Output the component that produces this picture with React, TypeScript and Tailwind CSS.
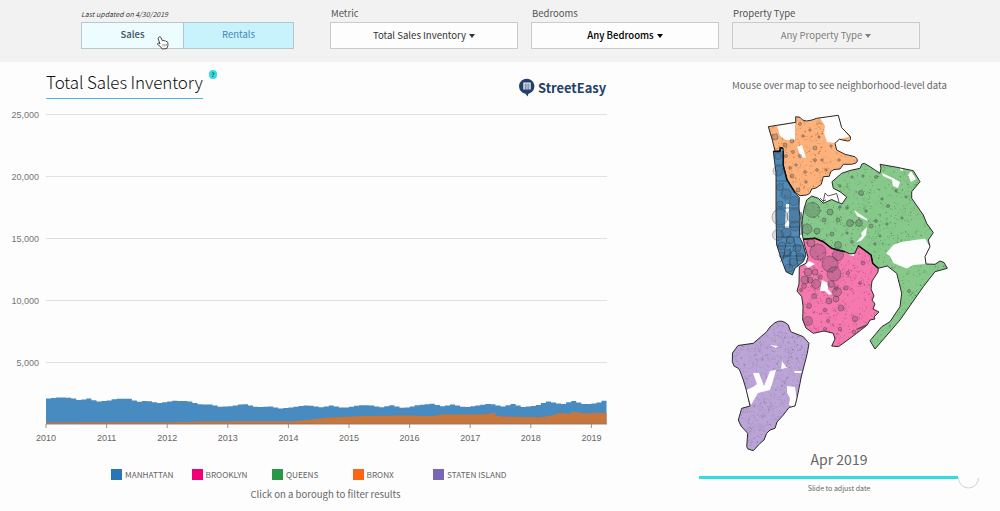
import React from 'react'

type Point = [number, number]

const BLUE_TOP: Point[] = [
  [46, 399], [52, 398], [62, 397.4], [72, 398], [80, 400.4], [88, 398.3], [98, 401.5], [109, 400.5], [116, 398.7], [130, 398.7],
  [138, 402], [147, 400.8], [159, 403], [175, 400.8], [188, 401], [200, 404.2], [211, 404.6], [220, 406.7], [230, 406.2], [244, 404],
  [258, 407.3], [270, 406.3], [282, 408.7], [297, 406.5], [308, 405.3], [322, 407.3], [331, 405.3], [343, 408], [360, 405.3], [370, 405.3],
  [382, 407.3], [392, 405.3], [404, 408.3], [417, 405.3], [433, 403.7], [443, 406.5], [453, 404.5], [465, 407.3], [490, 403.7], [503, 406.6],
  [513, 404], [523, 406.9], [537, 405.5], [548, 401.3], [563, 404.3], [573, 400.8], [585, 404.4], [597, 403.3], [606, 400],
]

const ORANGE_TOP: Point[] = [
  [46, 422.4], [175, 422.2], [210, 421.4], [295, 421.2], [310, 419.6], [325, 417.8], [360, 416], [410, 415.5], [430, 416.2], [442, 414.5],
  [480, 414.5], [494, 413], [499, 416.4], [540, 417.2], [551, 415.5], [562, 412.7], [568, 414], [573, 412], [585, 413.3], [606, 412.7],
]

function valueAt(points: Point[], x: number): number {
  for (let i = 1; i < points.length; i++) {
    if (x <= points[i][0]) {
      const [x0, y0] = points[i - 1]
      const [x1, y1] = points[i]
      return y0 + ((y1 - y0) * (x - x0)) / (x1 - x0)
    }
  }
  return points[points.length - 1][1]
}

function stepArea(points: Point[]): string {
  const months = 111
  const width = 560.5 / months
  let d = 'M46 424'
  for (let i = 0; i < months; i++) {
    const x = 46 + i * width
    const y = valueAt(points, x + width / 2).toFixed(1)
    d += `L${x.toFixed(1)} ${y}L${(x + width).toFixed(1)} ${y}`
  }
  return d + 'L606.5 424Z'
}

const GRID = [
  { y: 114.5, label: '25,000' },
  { y: 176.5, label: '20,000' },
  { y: 238.5, label: '15,000' },
  { y: 300.5, label: '10,000' },
  { y: 362.5, label: '5,000' },
]

const YEARS = [2010, 2011, 2012, 2013, 2014, 2015, 2016, 2017, 2018, 2019]

function Chart() {
  return (
    <svg width="620" height="350" viewBox="0 100 620 350" className="block font-['Liberation_Sans',sans-serif]">
      {GRID.map((g) => (
        <g key={g.label}>
          <path d={`M46 ${g.y}H607`} stroke="#e1e1e1" />
          <text x="39" y={g.y + 3.3} textAnchor="end" fontSize="9" fill="#747474">{g.label}</text>
        </g>
      ))}
      <path d={stepArea(BLUE_TOP)} fill="#478bc0" />
      <path d={stepArea(ORANGE_TOP)} fill="#c9763c" />
      <path d="M46 424H607" stroke="#8a7770" strokeWidth="0.9" />
      {YEARS.map((year, i) => (
        <g key={year}>
          <path d={`M${46 + i * 60.6} 424v4`} stroke="#888" strokeWidth="0.9" />
          <text x={46 + i * 60.6} y="440.6" textAnchor="middle" fontSize="9" fill="#666">{year}</text>
        </g>
      ))}
    </svg>
  )
}

const BRONX =
  'M768.3 126.7L795.7 122.3V116.7L800 117.3Q802 121 806.7 121L812 120L816.7 118.3L838.3 115.3L841.7 127.7L850 136Q852 141 847.5 141L839.3 139.3L835 143.3L836.7 150L845 154.3L855 156.7Q859 160 856 163L851.7 164.3L843.3 164.3L840 169L834 169.5L830.7 171.7L829.3 176.3L823.3 176.7L821.3 184.3L816 188L811.7 189Q810 195 806.7 195L800 195.7L791.7 190L785 178.3L783.3 166.7V151.7L775 151L772.3 140Z'
const MANHATTAN =
  'M773.3 151.5L780 151L780.7 147.3L783.3 148.3V165L787.3 180L795 192.7L799.3 197.3L799 208L800 218L799.3 236.7L802.7 243.3L806 255L803.3 261.7L795 268.3L792.3 275L786 271.7L781.7 260L776.7 245L776 216.7V173Z'
const QUEENS =
  'M806.7 200L811.7 196L818.3 198.3L823.3 203.3L831.7 199.5L837 202L842 204L846.7 197L840 191.7L833.3 188.3L832 181.7L841.7 173.3L850 170.5L860 168.3L862 164L864.3 163.3L870 166.7L880 173.3L881 168L880 164.3L897 167.3L913.3 170.7L920 181.7L911.7 191.7V198.3L923.3 215L926.7 223.3L933.3 232.7L928.3 240L930 246.7L925 256.7L926 264L935 264.3L940 261L944 262.5L947.3 268.3L935 271.7L923.3 286.7L900 320L875 349L870 340.7L881.7 326.7L890 321.7L900 306.7L901.7 293.3L896.7 273.3L887.3 266L878.3 268.3L872.7 263.3L871 255L858.3 245.7L855 253.3L850 254L845 251.7L838 250.5L831.7 248.3L823.3 241.7L815 238.3L803.3 239.3L802.7 236.7L801.7 223L804 209Z'
const BROOKLYN =
  'M803.3 239.3L815 238.3L823.3 241.7L831.7 248.3L838 250.5L845 251.7L850 254L855 253.3L858.3 245.7L871 255L872.7 263.3L878.3 268.3L878 272L872 281L871 289L874 296L872 300L875 304L873 309L879 312L874 317L875 319L870 320L867.3 325L856.7 333.3L845 342L838.3 346.7L831.7 346L835 339L833.3 333.3L824 331L813.3 333.3L806 328L802.7 320L803 306L801.7 296.7L797 291L799 284L799.3 266.7L806 263.3L808 257L805 247Z'
const STATEN =
  'M775 322.7Q782 318.5 788.3 325L790.7 331.7L803.3 336.7L809 343.3L807.3 353.3L803 370L801 378L800 383.3L797 398L795 406L789 407.5L783.3 415L777 422L775 428.3L770 430L766.7 433.3L764 440L760 443.3L753.3 450.7L748 449L746.7 446.7L747.7 433.3L741 426L738.3 420L741.7 408.3L750 406L746 389L743.3 380L740 371L738.3 368.3L734 366L732.3 361.7L732.5 353L738 345.5L753.3 343.3L766.7 331.7L770 327Z'

interface Borough {
  id: string
  path: string
  fill: string
  box: [number, number, number, number]
  dots: number
  dot: string
  blanks: string
}

const BOROUGHS: Borough[] = [
  {
    id: 'bronx', path: BRONX, fill: '#fdb27b', box: [768, 115, 90, 81], dots: 330, dot: '#975a32',
    blanks: 'M777 126L795 123V140L786 140L780 136ZM820 118L838 115L842 128L849 137L839 139L836 143L827 142L824 133L825 126ZM797 147L802 145L806 158L801 157Z',
  },
  {
    id: 'queens', path: QUEENS, fill: '#87c98a', box: [802, 163, 146, 186], dots: 1100, dot: '#3e7440',
    blanks: 'M886 253.5L893.3 245L901 242L925 238.5L930 247L925 257L926 264L913.3 265L906.7 268.5L893.3 263L890 256ZM854 210L867 219L868 221L857 216ZM867 227L861 233L862 236L856 242L861 241L866 235ZM882 173L893 178L900 182L898 188L893 186L892 180L883 176ZM911 171L916 179L911 182L908 175ZM900 168l3 1v2l-3-1Z',
  },
  {
    id: 'brooklyn', path: BROOKLYN, fill: '#f579ae', box: [796, 238, 84, 109], dots: 460, dot: '#8d3a68',
    blanks: 'M809 261L815 264L808 268L805 265ZM822 280L828 283L828 289L832 294L829 295L825 291L820 291ZM850 252L855 250L854 256L849 255Z',
  },
  {
    id: 'manhattan', path: MANHATTAN, fill: '#508bb9', box: [773, 147, 34, 128], dots: 70, dot: '#204d70',
    blanks: 'M786 204H789V228H785Z',
  },
  {
    id: 'staten', path: STATEN, fill: '#bba5d7', box: [732, 320, 78, 131], dots: 800, dot: '#846e9f',
    blanks: 'M753 373L759 373L764 386L770 371L776 370L773 381L770 390L758 393L751 405L746 390L753 387L757 384ZM782 361L787 368L781 369ZM794 371L802 371L801 373L795 373ZM787 386L795 387L797 402L793 407L789 405L790 398L787 393ZM770 345L778 346L776 348Z',
  },
]

function scatter(seed: number, count: number, [x, y, w, h]: [number, number, number, number]): Point[] {
  let s = seed
  const next = () => {
    s = (s * 16807) % 2147483647
    return s / 2147483647
  }
  return Array.from({ length: count }, () => [x + next() * w, y + next() * h] as Point)
}

function tracts(seed: number, count: number, box: [number, number, number, number]): string {
  return scatter(seed, count, box)
    .map(([x, y], i) => {
      const a = (i * 7) % 9 - 4
      const b = (i * 5) % 7 - 3
      return `M${x.toFixed(1)} ${y.toFixed(1)}l${a} ${b}l${b} ${-a}`
    })
    .join('')
}

const BUBBLES: [number, number, number][] = [
  [780, 217, 8], [794, 216, 7], [778, 235, 5.5], [778, 156, 3.5], [778, 171, 5], [780, 187, 3.5], [786, 194, 5], [794, 201, 4.5],
  [786, 233, 5], [795, 226, 5], [782, 246, 4], [790, 240, 4], [797, 248, 4], [788, 253, 3.5], [800, 257, 4], [793, 262, 4], [789, 268, 4], [782, 255, 3], [780, 204, 3],
  [812.5, 210, 7.5], [807, 229, 5], [817, 231, 3], [830, 212, 3], [850, 223, 3.5], [859, 223, 3.5], [861, 193, 2.5], [838, 220, 2],
  [871, 226, 2], [888, 206, 1.5], [838, 245, 3.5], [824, 220, 2], [832, 234, 2], [876, 177, 1.5], [909, 291, 1.5],
  [847, 208, 1.3], [840, 207, 1.3], [852, 177, 1.2], [863, 176, 1.2], [840, 186, 1.2], [876, 221, 1.5], [866, 211, 1.3], [882, 199, 1.2],
  [852, 242, 1.4], [875, 244, 1.3], [887, 224, 1.2], [902, 218, 1.1], [906, 197, 1.1], [847, 233, 1.2], [896, 191, 1.1], [880, 236, 1.1],
  [818, 252, 8], [830, 264, 8], [834, 274, 7], [838, 255, 5.5], [811, 243, 4], [816, 284, 4.5], [808, 272, 4], [805, 280, 4],
  [810, 280, 3], [815, 272, 3], [837, 292, 4.5], [831, 284, 3.5], [836, 299, 3], [829, 301, 3], [841, 308, 3], [814, 296, 2.5],
  [809, 306, 2.5], [808, 321, 4.5], [855, 319, 2.8], [863, 263, 2], [848, 273, 1.7], [836, 288, 2], [825, 310, 1.8], [840, 329, 1.8],
  [854, 332, 2], [828, 321, 1.5], [860, 283, 1.5], [820, 277, 2.3], [804, 286, 2.5], [801, 290, 1.5], [825, 329, 1.6], [846, 288, 2.2],
  [775, 137, 3], [785, 145, 2], [792, 176, 2], [798, 190, 2], [815, 148, 2], [800, 156, 1.5], [817, 170, 1.4], [839, 160, 1.3],
  [800, 124, 1.5], [792, 141, 2], [803, 136, 1.3], [786, 156, 1.5], [790, 168, 1.4], [805, 172, 1.4], [822, 160, 1.3], [831, 146, 1.2],
  [793, 152, 1.5], [815, 160, 1.5], [806, 182, 1.3], [826, 170, 1.2], [810, 130, 1.2], [819, 137, 1.2], [796, 165, 1.3],
]

function BoroughMap() {
  return (
    <svg width="300" height="350" viewBox="690 105 300 350" className="block">
      <path d="M823 203L825 193L828 196L836.7 193.5L839 202M820 198L823 201L826 200" fill="none" stroke="#333" strokeWidth="0.8" />
      {BOROUGHS.map((b, i) => (
        <g key={b.id}>
          <clipPath id={b.id}><path d={b.path} /></clipPath>
          <path d={b.path} fill={b.fill} />
          <g clipPath={`url(#${b.id})`}>
            <path d={tracts(97 + i * 31, Math.round(b.dots / 3), b.box)} fill="none" stroke={b.dot} strokeOpacity="0.22" strokeWidth="0.5" />
            {scatter(4211 + i * 977, b.dots, b.box).map(([x, y], n) => (
              <circle key={n} cx={x.toFixed(1)} cy={y.toFixed(1)} r={n % 9 === 0 ? 0.8 : 0.5} fill={b.dot} fillOpacity="0.6" />
            ))}
            <path d={b.blanks} fill="#fdfdfd" />
          </g>
          <path d={b.path} fill="none" stroke="#2c2c2c" strokeWidth="1" strokeLinejoin="round" />
        </g>
      ))}
      <path d="M783.3 151V166L787 180L795 192.5M803.3 239.3L815 238.3L823.3 241.7L831.7 248.3L845 251.7M858.3 245.7L871 255L872.7 263.3L878.3 268.3M773 151.5H780V148H783" fill="none" stroke="#111" strokeWidth="1.5" />
      <path d="M801 212L803 226L801 235L801 225ZM777 227h22M777 237h23M778 246h24M782 256h23M787 239l-4 20M794 238l4 28M776 181h11M776 165h7M776 208h23M790 248v20M780 262l14-12" fill="none" stroke="#17384f" strokeOpacity=".7" strokeWidth="0.7" />
      <path d="M856 329L867 324L865 327L857 330Z" fill="#555" />
      {BUBBLES.map(([x, y, r], i) => (
        <circle key={i} cx={x} cy={y} r={r} fill="#373747" fillOpacity={x < 800 && y > 147 && r > 2.5 ? 0.14 : 0.22} stroke="#343434" strokeOpacity="0.6" strokeWidth="0.6" />
      ))}
    </svg>
  )
}

function Caret() {
  return <span className="ml-[3px] h-0 w-0 border-x-[3px] border-t-[4px] border-x-transparent border-t-current" />
}

function Filter({ label, value, tone, box }: { label: string; value: string; tone: string; box: string }) {
  return (
    <div className="w-[188px] shrink-0">
      <div className="h-[22px] pt-[6px] pl-px text-[9.5px] leading-[14px] text-[#555]">{label}</div>
      <div className={`flex h-[27px] items-center justify-center border text-[9.6px] leading-none ${box} ${tone}`}>
        <span>{value}</span>
        <Caret />
      </div>
    </div>
  )
}

function Pointer() {
  return (
    <svg width="12" height="14" viewBox="0 0 12 14" className="absolute top-[13px] left-[75px]">
      <path
        d="M1.5 1.4Q3-.1 4 1.5L5.3 4.7Q6.2 3.8 7.1 4.9Q8.4 4.2 9 5.5Q10.3 5 10.7 6.4L11 9.4L9.8 12.5L5 13L3.8 10.9L.8 8.6Q-.1 7.1 1.5 7L3 7.8L1.2 2.8Z"
        fill="#fff" stroke="#333" strokeWidth="0.9" strokeLinejoin="round"
      />
      <path d="M6 8v2.5M7.8 8v2.5M9.3 8v2" stroke="#555" strokeWidth="0.6" />
    </svg>
  )
}

function Logo() {
  return (
    <div className="flex items-center gap-[3px] text-[#233f6b]">
      <svg width="16" height="19" viewBox="0 0 16 19">
        <path d="M8 .8a7.5 7.5 0 0 1 2.6 14.5L9.3 16L8.6 18.6L6.4 15.7A7.5 7.5 0 0 1 8 .8Z" fill="currentColor" />
        <path d="M4.3 4.6h7.4v7h-1.6v-1.4H9.6v1.4H6.4v-1.4H5.9v1.4H4.3Z" fill="#e8edf5" />
        <path d="M6.2 5.6v5M8 5.6v6M9.8 5.6v5" stroke="currentColor" strokeWidth=".7" />
      </svg>
      <span className="text-[12.9px] leading-[18px] font-bold">StreetEasy</span>
    </div>
  )
}

const LEGEND = [
  { name: 'MANHATTAN', swatch: 'bg-[#2976b6]' },
  { name: 'BROOKLYN', swatch: 'bg-[#ef0077]' },
  { name: 'QUEENS', swatch: 'bg-[#289748]' },
  { name: 'BRONX', swatch: 'bg-[#fc6418]' },
  { name: 'STATEN ISLAND', swatch: 'bg-[#7a64b5]' },
]

export default function App() {
  return (
    <div className="h-[511px] w-[1000px] overflow-hidden bg-[#fdfdfd] font-['Noto_Sans_CJK_SC','Noto_Sans',sans-serif] text-[#666]">
      <header className="flex h-[62px] bg-[#f2f2f2] pl-[81px]">
        <div className="mr-[36px] w-[213px] shrink-0">
          <div className="h-[22px] pt-[7px] text-[7px] leading-[14px] text-[#444] italic">Last updated on 4/30/2019</div>
          <div className="flex h-[27px] border border-[#b8c8ca] text-[9.5px] leading-none">
            <div className="relative flex w-[102px] items-center justify-center border-r border-[#a9c9d0] bg-[#edfdff] pb-px font-medium text-[#385264]">
              Sales
              <Pointer />
            </div>
            <div className="flex flex-1 items-center justify-center bg-[#c8f3fd] pb-px text-[#4388bb]">Rentals</div>
          </div>
        </div>
        <div className="flex gap-[13px]">
          <Filter label="Metric" value="Total Sales Inventory" tone="text-[#333]" box="bg-[#fdfdfd] border-[#c6cdca]" />
          <Filter label="Bedrooms" value="Any Bedrooms" tone="text-black font-medium" box="bg-[#fdfdfd] border-[#c6cdca]" />
          <Filter label="Property Type" value="Any Property Type" tone="text-[#808080]" box="bg-[#f2f2f2] border-[#c6cdca]" />
        </div>
      </header>
      <main className="flex h-[449px]">
        <section className="w-[670px] shrink-0">
          <div className="flex h-[38px] pl-[46px]">
            <h1 className="mt-[7px] h-[30px] w-[157px] shrink-0 border-b border-[#55aee8] text-[17px] leading-[25px] font-light tracking-[-0.12px] whitespace-nowrap text-[#111]">Total Sales Inventory</h1>
            <span className="mt-[8px] ml-[6px] flex h-[9px] w-[8px] shrink-0 items-center justify-center rounded-full bg-[#36d9dc] text-[6px] leading-none font-medium text-[#124]">?</span>
            <div className="mt-[16px] ml-[302px]"><Logo /></div>
          </div>
          <Chart />
          <div className="flex h-[31px] pt-[18px] pl-[111px]">
            {LEGEND.map((item) => (
              <div key={item.name} className="flex h-[12px] w-[80.5px] shrink-0 items-center gap-[3px] text-[8.2px] leading-[12px] whitespace-nowrap">
                <span className={`h-[11px] w-[11px] shrink-0 ${item.swatch}`} />
                {item.name}
              </div>
            ))}
          </div>
          <p className="w-[651px] pt-[6px] text-center text-[9.6px] leading-[14px]">Click on a borough to filter results</p>
        </section>
        <section className="w-[330px] shrink-0">
          <p className="h-[43px] pt-[16px] pl-[62px] text-[9.6px] leading-[14px]">Mouse over map to see neighborhood-level data</p>
          <div className="pl-[20px]"><BoroughMap /></div>
          <div className="-mt-[3px] w-[338px] text-center text-[14px] leading-[14px]">Apr 2019</div>
          <div className="mt-[8px] ml-[29px] flex h-[7px] items-center">
            <div className="h-[3px] w-[259px] bg-[#35dcde]" />
            <svg width="22" height="24" viewBox="1 0 22 24" className="shrink-0"><path d="M1.5 12A10 10 0 0 0 21.5 12" fill="none" stroke="#d4d0d4" /></svg>
          </div>
          <p className="w-[338px] pt-px text-center text-[7px] leading-[12px]">Slide to adjust date</p>
        </section>
      </main>
    </div>
  )
}
